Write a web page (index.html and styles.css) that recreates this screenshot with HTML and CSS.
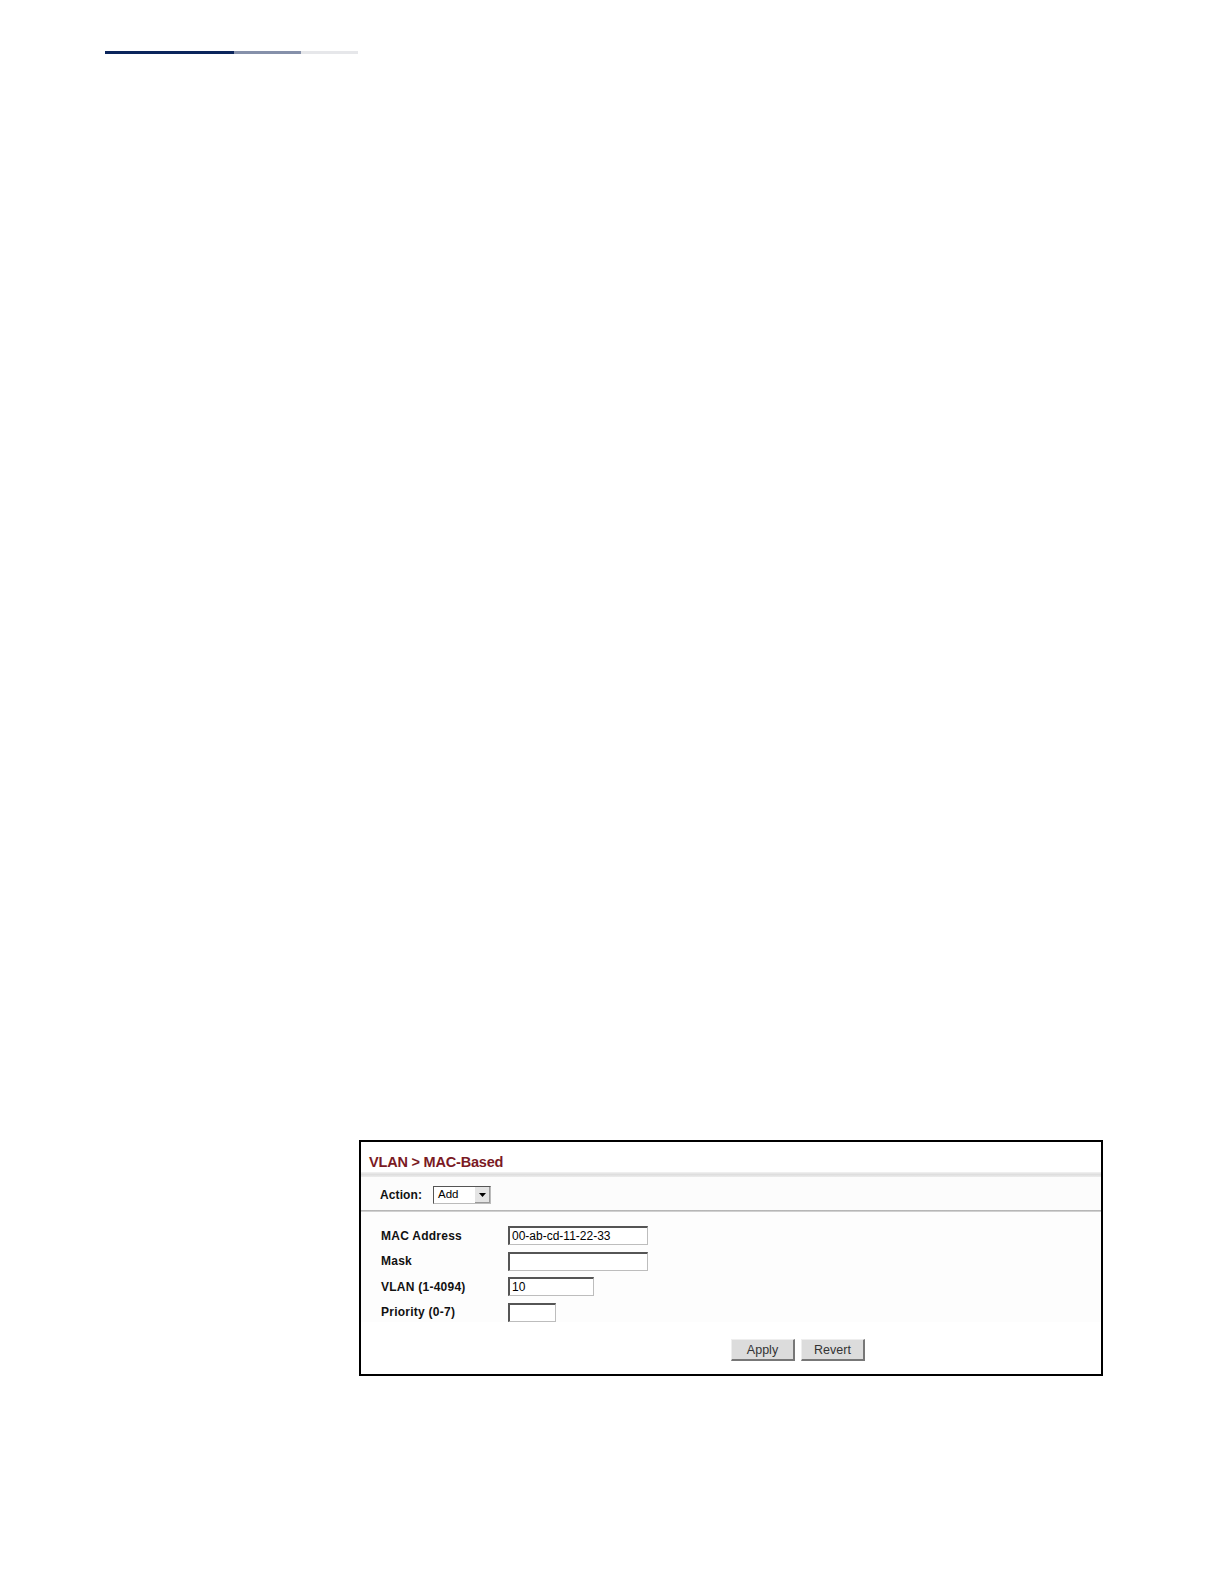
FILE: index.html
```html
<!DOCTYPE html>
<html>
<head>
<meta charset="utf-8">
<link rel="stylesheet" href="styles.css">
</head>
<body>
<div class="page">
  <div class="topbar">
    <span class="seg seg1"></span><span class="seg seg2"></span><span class="seg seg3"></span>
  </div>
  <div class="panel">
    <div class="title">VLAN &gt; MAC-Based</div>
    <div class="band"></div>
    <div class="action-row">
      <span class="action-label">Action:</span>
      <div class="select"><span class="select-text">Add</span><span class="select-btn"><svg width="7" height="4" viewBox="0 0 7 4"><path d="M0 0H7L3.5 4Z" fill="#000"/></svg></span></div>
    </div>
    <div class="divider"></div>
    <div class="form">
      <div class="row"><span class="label">MAC Address</span><span class="input w139">00-ab-cd-11-22-33</span></div>
      <div class="row"><span class="label">Mask</span><span class="input w139"></span></div>
      <div class="row"><span class="label">VLAN (1-4094)</span><span class="input w85">10</span></div>
      <div class="row"><span class="label">Priority (0-7)</span><span class="input w47"></span></div>
    </div>
    <div class="buttons">
      <span class="btn">Apply</span>
      <span class="btn">Revert</span>
    </div>
  </div>
</div>
</body>
</html>
```
FILE: styles.css
```css
html, body { margin: 0; padding: 0; background: #fff; }
body { font-family: "Liberation Sans", Arial, sans-serif; }
.page { width: 1224px; height: 1584px; position: relative; }
.topbar { display: flex; padding: 51px 0 0 105px; height: 3px; }
.seg { display: block; height: 3px; }
.seg1 { width: 129px; background: #0b255c; }
.seg2 { width: 67px; background: #8590aa; }
.seg3 { width: 57px; background: #e6e7ea; }
.panel {
  margin: 1086px 0 0 359px;
  width: 740px;
  height: 232px;
  border: 2px solid #000;
  background: #fff;
  display: flex;
  flex-direction: column;
}
.title {
  color: #7a1a24;
  font-weight: bold;
  font-size: 14.5px;
  padding: 12px 0 0 8px;
  height: 18px;
  letter-spacing: -0.2px;
}
.band {
  height: 5px;
  background: linear-gradient(#f2f2f2, #dedede, #ececec);
}
.action-row {
  display: flex;
  align-items: center;
  height: 33px;
  padding: 3px 0 0 19px;
  box-sizing: border-box;
  background: #fcfcfc;
}
.action-label { font-size: 12px; font-weight: bold; color: #111; width: 53px; letter-spacing: 0.1px; }
.select {
  display: flex;
  width: 58px;
  height: 18px;
  border: 1px solid #555;
  border-right-color: #bbb;
  border-bottom-color: #bbb;
  background: #fff;
  box-sizing: border-box;
}
.select-text { font-size: 11.5px; padding: 1px 0 0 4px; flex: 1; color: #000; }
.select-btn {
  width: 15px;
  background: #e4e4e4;
  border-left: 1px solid #fff;
  display: flex;
  align-items: center;
  justify-content: center;
  box-shadow: inset -1px -1px 0 #999;
}
.divider { height: 2px; background: linear-gradient(#aaa, #ddd); }
.form { padding: 14px 0 0 20px; display: flex; flex-direction: column; gap: 6px; background: #fdfdfd; }
.row { display: flex; align-items: center; height: 19.5px; }
.label { width: 127px; font-size: 12px; font-weight: bold; color: #111; letter-spacing: 0.25px; }
.input {
  height: 19px;
  box-sizing: border-box;
  border: 1px solid #bdbdbd;
  border-top: 2px solid #555;
  border-left: 2px solid #555;
  font-size: 12px;
  padding: 1px 0 0 2px;
  background: #fff;
  color: #000;
}
.w139 { width: 140px; }
.w85 { width: 86px; }
.w47 { width: 48px; }
.buttons { display: flex; gap: 6px; padding: 17px 0 0 370px; }
.btn {
  width: 64px;
  height: 22px;
  box-sizing: border-box;
  background: #dcdcdc;
  border: 1px solid #eee;
  border-right: 2px solid #777;
  border-bottom: 2px solid #777;
  font-size: 12.5px;
  color: #333;
  display: flex;
  align-items: center;
  justify-content: center;
}
```
